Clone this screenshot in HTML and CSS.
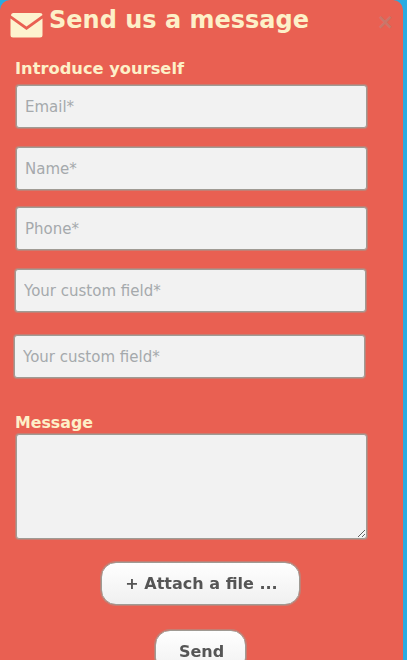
FILE: index.html
```html
<!DOCTYPE html>
<html lang="en">
<head>
    <meta charset="UTF-8">
    <meta name="viewport" content="width=device-width, initial-scale=1.0">
    <title>Send us a message</title>
    <link rel="stylesheet" href="styles.css">
</head>
<body>
    <div class="panel">
        <div class="panel-head">
            <svg class="mail-icon" viewBox="0 0 33 26" width="33" height="26">
                <path d="M1 3.5 Q1 1 3.5 1 H30 Q32.500 1 32.500 3 L16.500 14.500 Z" fill="#fdf3cf"/>
                <path d="M0.500 6.500 L16.500 18 L32.500 6.500 V23 Q32.500 25.500 30 25.500 H3 Q0.500 25.500 0.500 23 Z" fill="#fdf3cf"/>
            </svg>
            <h1>Send us a message</h1>
            <span class="close">&times;</span>
        </div>

        <form class="contact-form">
            <label class="group-title">Introduce yourself</label>
            <input type="text" class="field field-first" placeholder="Email*">
            <input type="text" class="field field-name" placeholder="Name*">
            <input type="text" class="field field-phone" placeholder="Phone*">
            <input type="text" class="field field-custom" placeholder="Your custom field*">
            <input type="text" class="field field-custom2" placeholder="Your custom field*">

            <label class="group-title message-title">Message</label>
            <textarea class="field message"></textarea>

            <div class="actions">
                <button type="button" class="btn attach">+ Attach a file ...</button>
                <button type="submit" class="btn send">Send</button>
            </div>
        </form>
    </div>
</body>
</html>
```

FILE: styles.css
```css
html, body {
    height: 100%;
}
body {
    margin: 0;
    background-color: #29abe2;
    font-family: "DejaVu Sans", Verdana, sans-serif;
    overflow: hidden;
}
.panel {
    width: 403px;
    height: 660px;
    box-sizing: border-box;
    background-color: #e96052;
    border-radius: 10px 10px 0 0;
    overflow: hidden;
    filter: blur(0.4px);
}
.panel-head {
    display: flex;
    align-items: flex-start;
    padding: 6px 9px 0 10px;
    height: 55px;
    box-sizing: border-box;
}
.mail-icon {
    margin-top: 6px;
    flex-shrink: 0;
}
h1 {
    margin: 0 0 0 6px;
    flex: 1;
    font-size: 24px;
    line-height: 29px;
    font-weight: bold;
    color: #fdf0c8;
}
.close {
    margin-top: 4px;
    font-size: 21px;
    line-height: 24px;
    font-weight: bold;
    color: #c9766a;
}
.contact-form {
    display: flex;
    flex-direction: column;
    align-items: flex-start;
}
.group-title {
    margin: 4px 0 5px 15px;
    height: 20px;
    font-size: 16.300px;
    line-height: 20px;
    font-weight: bold;
    color: #fdf0c8;
}
.field {
    display: block;
    box-sizing: border-box;
    width: 351px;
    height: 43px;
    margin: 1px 0 0 16px;
    padding: 0 7px 0 8px;
    border: 1px solid #a09b94;
    border-radius: 3px;
    background-color: #f2f2f2;
    box-shadow: 0 0 0 1px rgba(160, 155, 148, 0.5);
    font-family: inherit;
    font-size: 15px;
    color: #555;
}
.field::placeholder {
    color: #a5a9ac;
    opacity: 1;
}
.field-name {
    margin-top: 19px;
}
.field-phone {
    margin-top: 17px;
}
.field-custom {
    margin: 19px 0 0 15px;
}
.field-custom2 {
    margin: 23px 0 0 14px;
}
.message-title {
    margin: 35px 0 0 15px;
    font-size: 15.800px;
}
.message {
    height: 105px;
    margin-top: 1px;
}
.actions {
    align-self: stretch;
    display: flex;
    flex-direction: column;
    align-items: center;
    margin-left: -2px;
}
.btn {
    box-sizing: border-box;
    height: 43px;
    padding-left: 8px;
    border: 1px solid #a09b94;
    border-radius: 15px;
    background: linear-gradient(#ffffff, #f0f0f0);
    box-shadow: 0 0 0 1px rgba(160, 155, 148, 0.5);
    font-family: inherit;
    font-size: 16px;
    font-weight: bold;
    color: #555;
}
.attach {
    width: 199px;
    margin-top: 23px;
}
.send {
    width: 91px;
    margin-top: 25px;
}
```
